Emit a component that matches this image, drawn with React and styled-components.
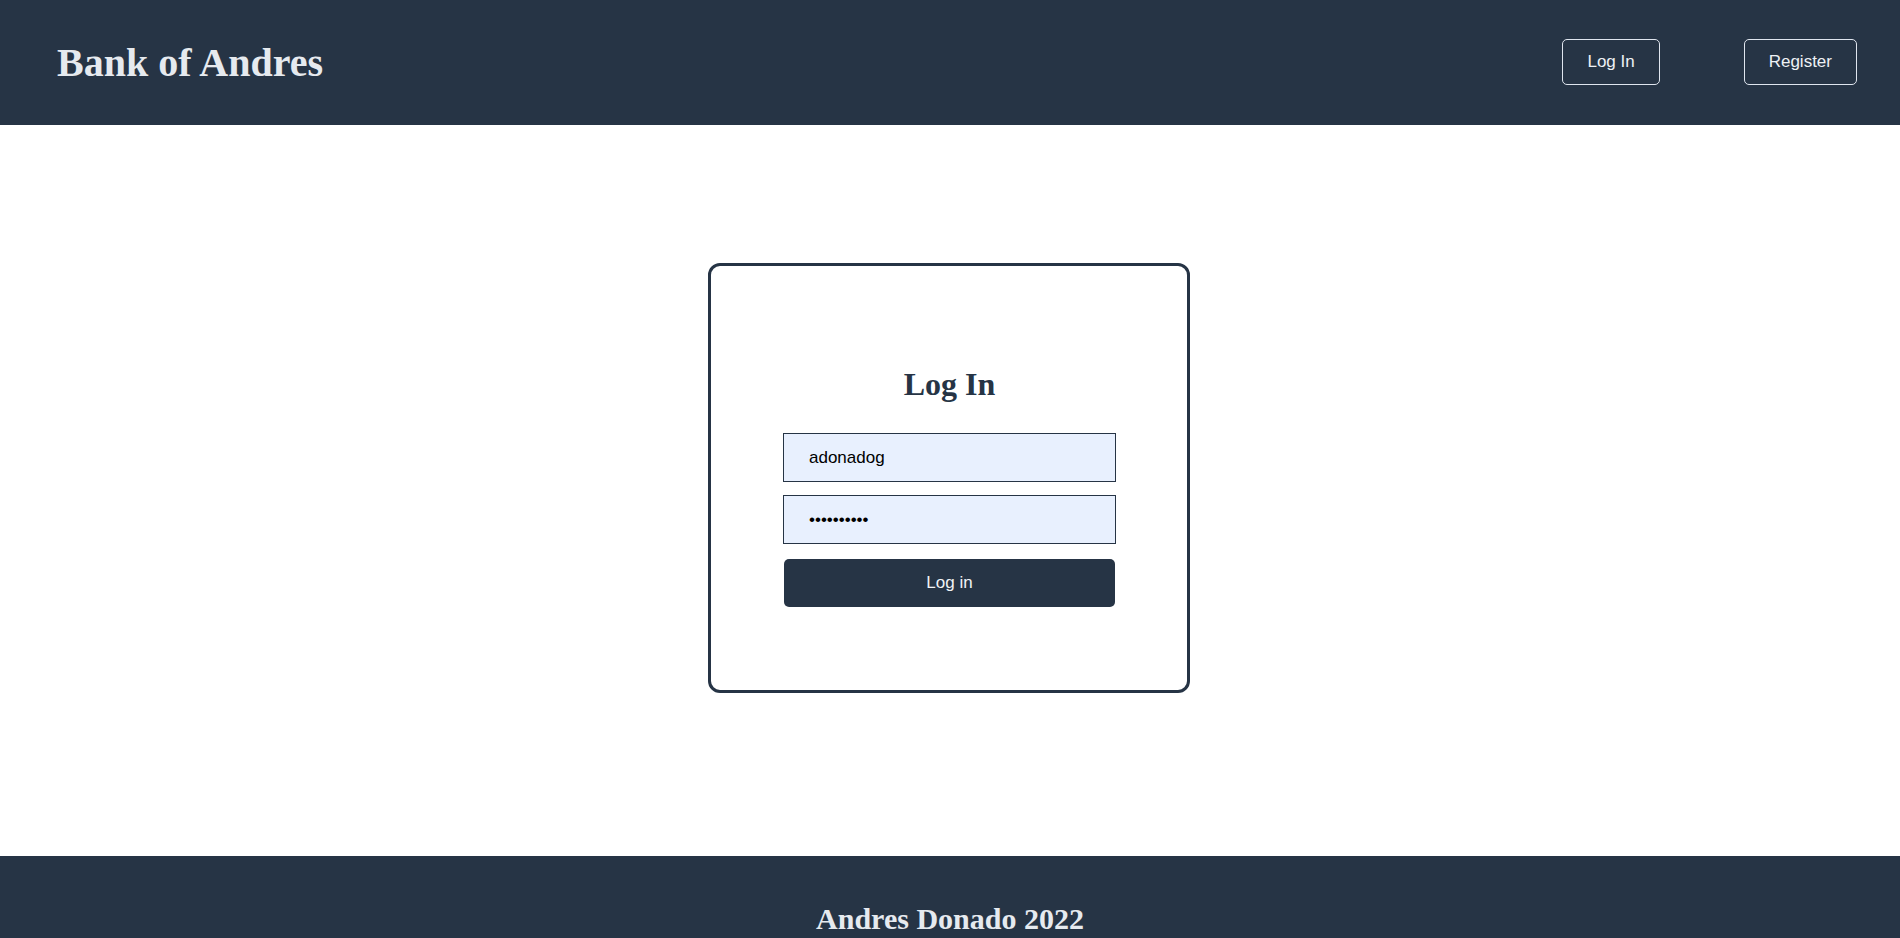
import styled, { createGlobalStyle } from 'styled-components';

const GlobalStyle = createGlobalStyle`
  html, body {
    margin: 0;
    padding: 0;
    background: #ffffff;
  }

  * {
    box-sizing: border-box;
  }
`;

export default function App() {
  return (
    <>
      <GlobalStyle />
      <Page>
        <Header>
          <Brand>Bank of Andres</Brand>
          <Nav>
            <NavButton>Log In</NavButton>
            <NavButton>Register</NavButton>
          </Nav>
        </Header>

        <Main>
          <Card>
            <Title>Log In</Title>
            <Form onSubmit={(e) => e.preventDefault()}>
              <Input type='text' defaultValue='adonadog' />
              <Input type='password' defaultValue='adonado123' />
              <SubmitButton type='submit'>Log in</SubmitButton>
            </Form>
          </Card>
        </Main>

        <Footer>
          <FooterText>Andres Donado 2022</FooterText>
        </Footer>
      </Page>
    </>
  );
}

const Page = styled.div`
  display: flex;
  flex-direction: column;
  min-height: 100vh;
`;

const Header = styled.header`
  height: 125px;
  background-color: #263445;
  display: flex;
  align-items: center;
  justify-content: space-between;
  padding: 0 43px 1px 57px;
`;

const Brand = styled.h1`
  margin: 0;
  font-family: "Liberation Serif", "Times New Roman", serif;
  font-size: 40px;
  font-weight: bold;
  color: #e6eaef;
`;

const Nav = styled.nav`
  display: flex;
  align-items: center;
  gap: 84px;
`;

const NavButton = styled.button`
  height: 46px;
  padding: 0 24px;
  background: transparent;
  border: 1px solid #dfe5ee;
  border-radius: 5px;
  color: #eef1f5;
  font-family: "Liberation Sans", Arial, sans-serif;
  font-size: 17px;
  cursor: pointer;
`;

const Main = styled.main`
  display: flex;
  justify-content: center;
  padding: 138px 2px 163px 0;
`;

const Card = styled.section`
  width: 482px;
  height: 430px;
  border: 3px solid #263445;
  border-radius: 12px;
  padding: 100px 71px 0 72px;
`;

const Title = styled.h2`
  margin: 0 0 30px;
  text-align: center;
  font-family: "Liberation Serif", "Times New Roman", serif;
  font-size: 32px;
  font-weight: bold;
  color: #263445;
`;

const Form = styled.form`
  display: flex;
  flex-direction: column;
  gap: 13px;
`;

const Input = styled.input`
  width: 100%;
  height: 49px;
  padding: 0 25px;
  border: 1px solid #263445;
  border-radius: 0;
  background-color: #e8f0fe;
  color: #000000;
  font-family: "Liberation Sans", Arial, sans-serif;
  font-size: 17px;
  outline: none;
`;

const SubmitButton = styled.button`
  height: 48px;
  margin: 2px 1px 0;
  border: none;
  border-radius: 5px;
  background-color: #263445;
  color: #f1f3f6;
  font-family: "Liberation Sans", Arial, sans-serif;
  font-size: 17px;
  cursor: pointer;
`;

const Footer = styled.footer`
  background-color: #263445;
  padding: 46px 0 60px;
  text-align: center;
`;

const FooterText = styled.h3`
  margin: 0;
  font-family: "Liberation Serif", "Times New Roman", serif;
  font-size: 30px;
  font-weight: bold;
  color: #e6eaef;
`;
